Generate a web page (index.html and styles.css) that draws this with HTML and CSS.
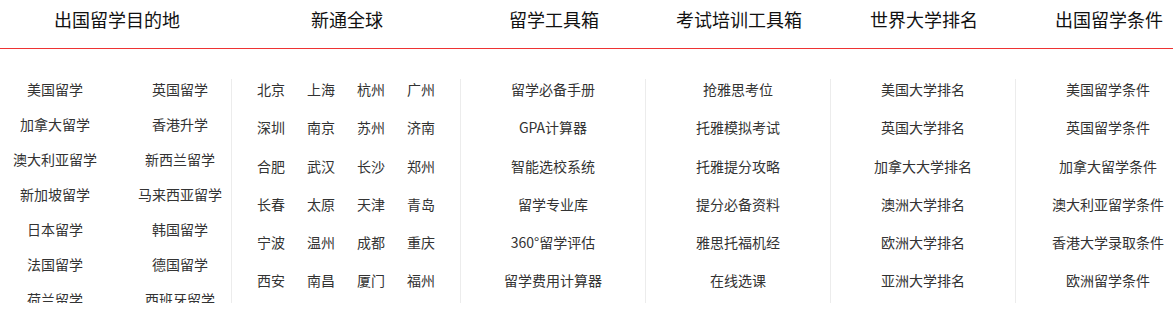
FILE: index.html
```html
<!DOCTYPE html>
<html lang="zh-CN">
<head>
    <meta charset="UTF-8">
    <title>出国留学导航</title>
    <link rel="stylesheet" href="styles.css">
</head>
<body>
    <div id="nav">
        <div class="tabs">
            <div class="tab w1">出国留学目的地</div>
            <div class="tab w2">新通全球</div>
            <div class="tab">留学工具箱</div>
            <div class="tab">考试培训工具箱</div>
            <div class="tab">世界大学排名</div>
            <div class="tab">出国留学条件</div>
        </div>
        <div class="panels">
            <ul class="col w1 countries">
                <li>美国留学</li><li>英国留学</li>
                <li>加拿大留学</li><li>香港升学</li>
                <li>澳大利亚留学</li><li>新西兰留学</li>
                <li>新加坡留学</li><li>马来西亚留学</li>
                <li>日本留学</li><li>韩国留学</li>
                <li>法国留学</li><li>德国留学</li>
                <li>荷兰留学</li><li>西班牙留学</li>
            </ul>
            <ul class="col w2 cities">
                <li>北京</li><li>上海</li><li>杭州</li><li>广州</li>
                <li>深圳</li><li>南京</li><li>苏州</li><li>济南</li>
                <li>合肥</li><li>武汉</li><li>长沙</li><li>郑州</li>
                <li>长春</li><li>太原</li><li>天津</li><li>青岛</li>
                <li>宁波</li><li>温州</li><li>成都</li><li>重庆</li>
                <li>西安</li><li>南昌</li><li>厦门</li><li>福州</li>
            </ul>
            <ul class="col list">
                <li>留学必备手册</li>
                <li>GPA计算器</li>
                <li>智能选校系统</li>
                <li>留学专业库</li>
                <li>360°留学评估</li>
                <li>留学费用计算器</li>
            </ul>
            <ul class="col list">
                <li>抢雅思考位</li>
                <li>托雅模拟考试</li>
                <li>托雅提分攻略</li>
                <li>提分必备资料</li>
                <li>雅思托福机经</li>
                <li>在线选课</li>
            </ul>
            <ul class="col list">
                <li>美国大学排名</li>
                <li>英国大学排名</li>
                <li>加拿大大学排名</li>
                <li>澳洲大学排名</li>
                <li>欧洲大学排名</li>
                <li>亚洲大学排名</li>
            </ul>
            <ul class="col list">
                <li>美国留学条件</li>
                <li>英国留学条件</li>
                <li>加拿大留学条件</li>
                <li>澳大利亚留学条件</li>
                <li>香港大学录取条件</li>
                <li>欧洲留学条件</li>
            </ul>
        </div>
    </div>
</body>
</html>
```

FILE: styles.css
```css
body {
    margin: 0;
    font-family: "Noto Sans CJK SC", "Liberation Sans", sans-serif;
    background-color: #fff;
    overflow: hidden;
}
#nav {
    width: 1200px;
}
.tabs {
    display: flex;
    height: 48px;
    border-bottom: 1px solid #ee3333;
}
.tab {
    flex: 0 0 185px;
    line-height: 38px;
    font-size: 18px;
    color: #111;
    text-align: center;
    padding-left: 3px;
    box-sizing: border-box;
}
.panels {
    display: flex;
    margin-top: 30px;
}
.col {
    list-style: none;
    margin: 0;
    padding: 0;
    flex: 0 0 185px;
    height: 224px;
    overflow: hidden;
    border-left: 1px solid #ececec;
    box-sizing: border-box;
    font-size: 14px;
    color: #333;
}
.tabs .w1,
.panels .w1 {
    flex-basis: 231px;
}
.tabs .w2,
.panels .w2 {
    flex-basis: 229px;
}
.col li {
    line-height: 20px;
    white-space: nowrap;
}
.countries {
    border-left: none;
    display: grid;
    grid-template-columns: 110px 110px;
    column-gap: 15px;
    row-gap: 15px;
    align-content: start;
    text-align: center;
}
.cities {
    display: grid;
    grid-template-columns: repeat(4, 50px);
    row-gap: 18.3px;
    align-content: start;
    padding-left: 25px;
}
.list {
    display: flex;
    flex-direction: column;
    gap: 18.3px;
    text-align: center;
}
```
